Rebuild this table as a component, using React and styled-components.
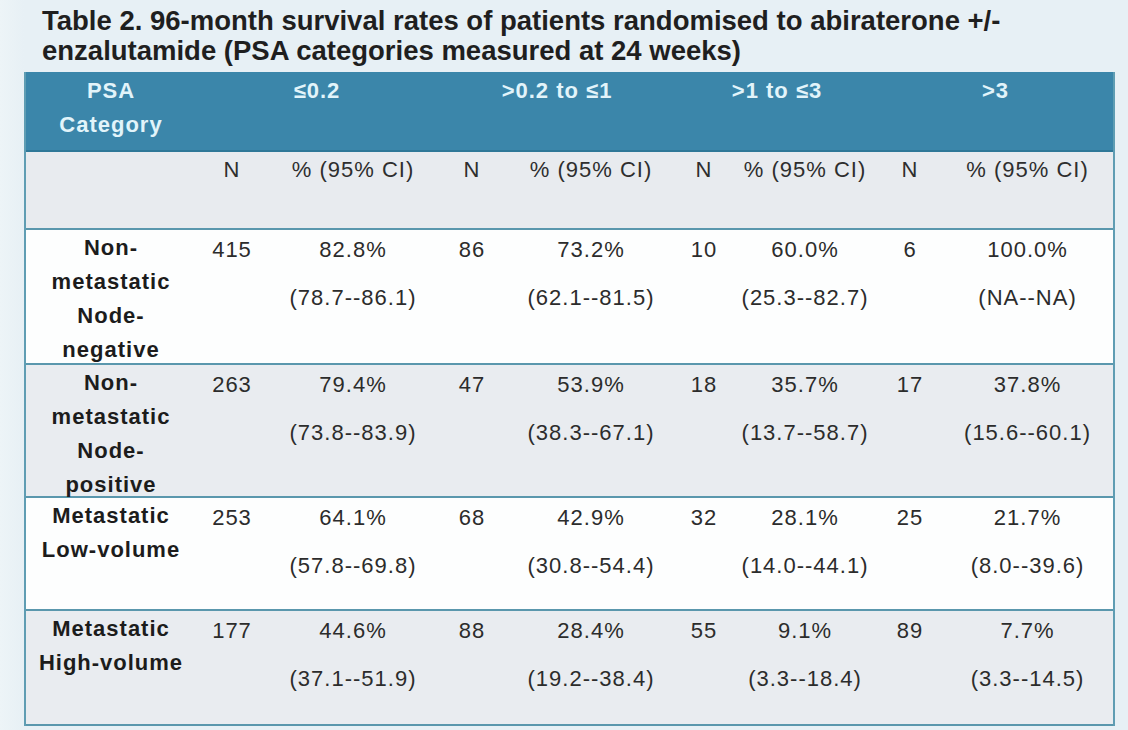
import React from "react";
import styled, { createGlobalStyle } from "styled-components";

const GlobalStyle = createGlobalStyle`
  html, body {
    margin: 0;
    padding: 0;
    background: #e7f0f5;
  }
  body {
    font-family: "Liberation Sans", Arial, sans-serif;
  }
`;

const Page = styled.div`
  width: 1128px;
  height: 730px;
  overflow: hidden;
  background: linear-gradient(90deg, #edf4f7 0px, #e7f0f5 24px);
`;

const Title = styled.h1`
  margin: 0;
  padding: 6px 0 0 42px;
  height: 72px;
  box-sizing: border-box;
  font-size: 27.5px;
  line-height: 30px;
  font-weight: 700;
  color: #1f1f1f;
`;

const Table = styled.table`
  margin-left: 24px;
  width: 1089px;
  table-layout: fixed;
  border-collapse: separate;
  border-spacing: 0;
  border-left: 2px solid #5f9db3;
  border-right: 2px solid #5f9db3;
  letter-spacing: 1px;
  font-size: 22px;
`;

const HeadCell = styled.th`
  background: #3b86aa;
  color: #e2f4fa;
  font-weight: 700;
  text-align: center;
  vertical-align: top;
  padding: 2px 0 0;
  height: 80px;
  box-sizing: border-box;
  line-height: 34px;
  border-bottom: 2px solid #2f7898;
`;

const SubCell = styled.td`
  background: #e8ebef;
  color: #2e2e2e;
  text-align: center;
  vertical-align: top;
  padding: 1px 0 0;
  height: 78px;
  box-sizing: border-box;
  line-height: 34px;
  border-bottom: 2px solid #5a97ad;
`;

const Cell = styled.td`
  background: ${(p) => (p.$shade ? "#e9ecf0" : "#fdfefe")};
  color: #2c2c2c;
  text-align: center;
  vertical-align: top;
  padding: 3px 0 0;
  height: ${(p) => p.$h}px;
  box-sizing: border-box;
  border-bottom: 2px solid #5a97ad;
`;

const Category = styled.div`
  font-weight: 700;
  color: #1c1c1c;
  line-height: 34px;
  margin-top: -2px;
  margin-bottom: -12px;
`;

const Value = styled.div`
  line-height: 33px;
`;

const Interval = styled.div`
  line-height: 33px;
  margin-top: 15px;
`;

const cols = [170, 72, 170, 68, 170, 56, 146, 64, 171];

const groups = ["≤0.2", ">0.2 to ≤1", ">1 to ≤3", ">3"];

const rows = [
  {
    label: ["Non-", "metastatic", "Node-", "negative"],
    h: 135,
    cells: [
      ["415", "82.8%", "(78.7--86.1)"],
      ["86", "73.2%", "(62.1--81.5)"],
      ["10", "60.0%", "(25.3--82.7)"],
      ["6", "100.0%", "(NA--NA)"],
    ],
  },
  {
    label: ["Non-", "metastatic", "Node-", "positive"],
    h: 133,
    cells: [
      ["263", "79.4%", "(73.8--83.9)"],
      ["47", "53.9%", "(38.3--67.1)"],
      ["18", "35.7%", "(13.7--58.7)"],
      ["17", "37.8%", "(15.6--60.1)"],
    ],
  },
  {
    label: ["Metastatic", "Low-volume"],
    h: 113,
    cells: [
      ["253", "64.1%", "(57.8--69.8)"],
      ["68", "42.9%", "(30.8--54.4)"],
      ["32", "28.1%", "(14.0--44.1)"],
      ["25", "21.7%", "(8.0--39.6)"],
    ],
  },
  {
    label: ["Metastatic", "High-volume"],
    h: 115,
    cells: [
      ["177", "44.6%", "(37.1--51.9)"],
      ["88", "28.4%", "(19.2--38.4)"],
      ["55", "9.1%", "(3.3--18.4)"],
      ["89", "7.7%", "(3.3--14.5)"],
    ],
  },
];

const App = () => {
  return (
    <Page>
      <GlobalStyle />
      <Title>
        Table 2. 96-month survival rates of patients randomised to abiraterone +/-
        <br />
        enzalutamide (PSA categories measured at 24 weeks)
      </Title>
      <Table>
        <colgroup>
          {cols.map((w, i) => (
            <col key={i} style={{ width: w }} />
          ))}
        </colgroup>
        <thead>
          <tr>
            <HeadCell>
              PSA
              <br />
              Category
            </HeadCell>
            {groups.map((g) => (
              <HeadCell key={g} colSpan={2}>
                {g}
              </HeadCell>
            ))}
          </tr>
        </thead>
        <tbody>
          <tr>
            <SubCell />
            {groups.map((g) => (
              <React.Fragment key={g}>
                <SubCell>N</SubCell>
                <SubCell>% (95% CI)</SubCell>
              </React.Fragment>
            ))}
          </tr>
          {rows.map((row, ri) => (
            <tr key={ri}>
              <Cell $shade={ri % 2 === 1} $h={row.h}>
                <Category>
                  {row.label.map((l) => (
                    <div key={l}>{l}</div>
                  ))}
                </Category>
              </Cell>
              {row.cells.map(([n, pct, ci], ci2) => (
                <React.Fragment key={ci2}>
                  <Cell $shade={ri % 2 === 1} $h={row.h}>
                    <Value>{n}</Value>
                  </Cell>
                  <Cell $shade={ri % 2 === 1} $h={row.h}>
                    <Value>{pct}</Value>
                    <Interval>{ci}</Interval>
                  </Cell>
                </React.Fragment>
              ))}
            </tr>
          ))}
        </tbody>
      </Table>
    </Page>
  );
};

export default App;
